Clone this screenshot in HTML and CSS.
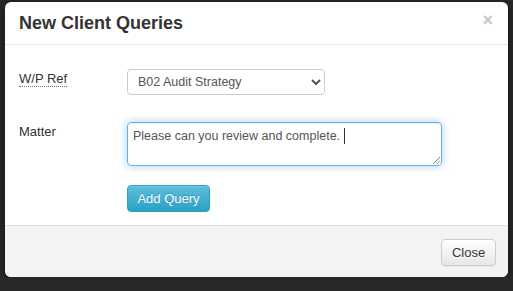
FILE: index.html
```html
<!DOCTYPE html>
<html lang="en">
<head>
  <meta charset="UTF-8">
  <meta name="viewport" content="width=device-width, initial-scale=1.0">
  <title>New Client Queries</title>
  <link rel="stylesheet" href="styles.css">
</head>
<body>
  <!-- Modal dialog -->
  <div class="modal">
    <div class="modal-header">
      <h4 class="modal-title">New Client Queries</h4>
      <span class="close">&times;</span>
    </div>

    <div class="modal-body">
      <div class="form-row">
        <label class="form-label"><abbr title="Working Paper Reference">W/P Ref</abbr></label>
        <select class="form-select">
          <option>B02 Audit Strategy</option>
        </select>
      </div>

      <div class="form-row">
        <label class="form-label">Matter</label>
        <div class="form-textarea">Please can you review and complete. <span class="caret"></span>
          <svg class="grip" width="8" height="8" viewBox="0 0 8 8">
            <path d="M1 8 L8 1 M4.5 8 L8 4.5" stroke="#888" stroke-width="1" fill="none"/>
          </svg>
        </div>
      </div>

      <div class="form-row">
        <span class="form-label"></span>
        <button class="btn btn-info">Add Query</button>
      </div>
    </div>

    <div class="modal-footer">
      <button class="btn btn-default">Close</button>
    </div>
  </div>
</body>
</html>
```

FILE: styles.css
```css
/* General Styles */
body {
  font-family: 'Liberation Sans', Arial, sans-serif;
  font-size: 13px;
  margin: 0;
  padding: 2px 5px 0 5px;
  background: #282828;
  color: #333;
}

/* Modal */
.modal {
  background: #fff;
  border-radius: 6px;
  width: 503px;
  overflow: hidden;
  box-shadow: 0 3px 9px rgba(0, 0, 0, 0.5);
}

.modal-header {
  display: flex;
  justify-content: space-between;
  align-items: flex-start;
  padding: 11px 14px;
  border-bottom: 1px solid #e5e5e5;
}

.modal-title {
  margin: 0;
  font-size: 18px;
  line-height: 20px;
  font-weight: bold;
  color: #333;
}

.close {
  color: #c8c8c8;
  font-size: 18px;
  font-weight: bold;
  line-height: 14px;
  margin-right: 1px;
}

.modal-body {
  padding: 24px 14px 13px;
}

.form-row {
  display: flex;
  align-items: flex-start;
  margin-bottom: 27px;
}

.form-row:nth-child(2) {
  margin-bottom: 19px;
}

.form-row:last-child {
  margin-bottom: 0;
}

.form-label {
  width: 108px;
  flex-shrink: 0;
  padding-top: 2px;
  color: #333;
}

abbr {
  text-decoration: none;
  border-bottom: 1px dotted #777;
}

.form-select {
  width: 198px;
  height: 26px;
  padding: 2px 6px;
  font-family: inherit;
  font-size: 12.5px;
  color: #555;
  background: #fff;
  border: 1px solid #ccc;
  border-radius: 4px;
}

.form-textarea {
  position: relative;
  box-sizing: border-box;
  width: 315px;
  height: 44px;
  padding: 4px 5px;
  font-size: 12.5px;
  line-height: 18px;
  color: #555;
  border: 1px solid #66afe9;
  border-radius: 4px;
  box-shadow: inset 0 1px 1px rgba(0, 0, 0, 0.075), 0 0 8px rgba(102, 175, 233, 0.6);
}

.caret {
  display: inline-block;
  width: 1px;
  height: 16px;
  background: #333;
  vertical-align: -4px;
}

.grip {
  position: absolute;
  right: 1px;
  bottom: 1px;
}

/* Buttons */
.btn {
  font-family: inherit;
  font-size: 13px;
  line-height: 18px;
  border-radius: 4px;
  cursor: pointer;
}

.btn-info {
  width: 83px;
  height: 27px;
  padding: 0;
  color: #fff;
  text-shadow: 0 -1px 0 rgba(0, 0, 0, 0.25);
  background: linear-gradient(#5bc0de, #2aa0c4);
  border: 1px solid #2a9fc2;
  box-shadow: inset 0 1px 0 rgba(255, 255, 255, 0.15);
}

.btn-default {
  width: 55px;
  height: 27px;
  padding: 0;
  color: #333;
  text-shadow: 0 1px 0 #fff;
  background: linear-gradient(#fff, #e6e6e6);
  border: 1px solid #ccc;
  box-shadow: 0 1px 1px rgba(0, 0, 0, 0.05);
}

.modal-footer {
  display: flex;
  justify-content: flex-end;
  padding: 13px 12px 11px;
  background: #f3f3f3;
  border-top: 1px solid #dedede;
}
```
